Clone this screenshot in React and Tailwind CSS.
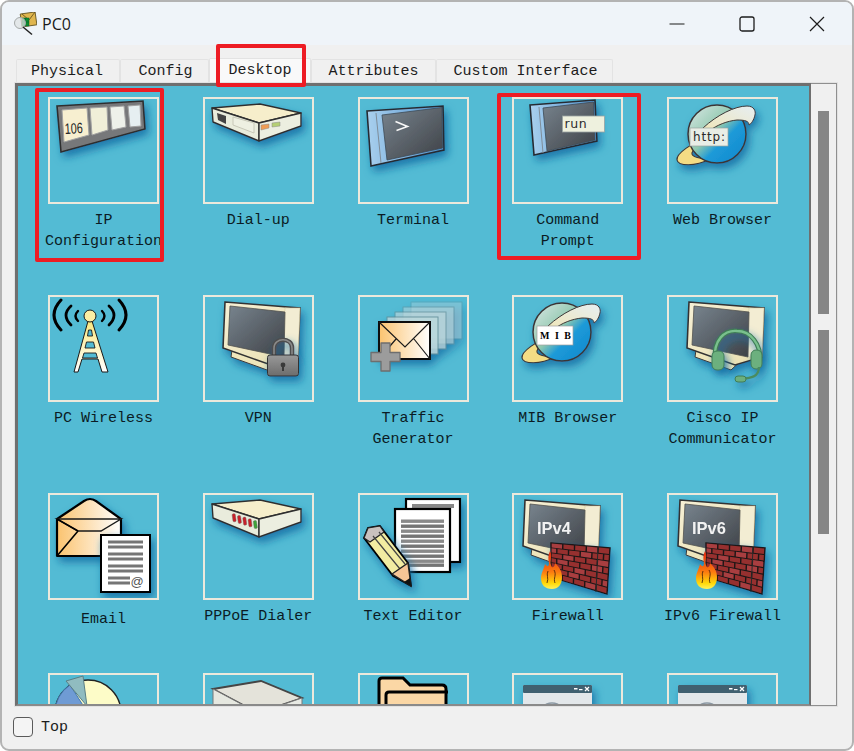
const MONO = "[font-family:'Liberation_Mono',monospace]";

function pts(a) { return a.map((p) => p.join(",")).join(" "); }

function Defs() {
  return (
    <svg className="absolute w-0 h-0" aria-hidden="true">
      <defs>
        <filter id="sh" x="-25%" y="-25%" width="160%" height="160%">
          <feDropShadow dx="3" dy="5" stdDeviation="4" floodColor="#136fa6" floodOpacity="0.9" />
        </filter>
        <filter id="soft" x="-10%" y="-10%" width="120%" height="120%">
          <feGaussianBlur stdDeviation="0.5" />
        </filter>
        <linearGradient id="scr" x1="0" y1="0" x2="1" y2="1">
          <stop offset="0" stopColor="#78848e" />
          <stop offset="1" stopColor="#3e4146" />
        </linearGradient>
        <linearGradient id="cream" x1="0" y1="0" x2="1" y2="1">
          <stop offset="0" stopColor="#f6f0d6" />
          <stop offset="1" stopColor="#eadfae" />
        </linearGradient>
        <linearGradient id="env" x1="0" y1="0" x2="1" y2="0">
          <stop offset="0" stopColor="#fbc36f" />
          <stop offset="1" stopColor="#ffffff" />
        </linearGradient>
        <linearGradient id="globe" x1="0" y1="0" x2="1" y2="1">
          <stop offset="0" stopColor="#dce8e6" />
          <stop offset="0.45" stopColor="#8fc8ae" />
          <stop offset="0.62" stopColor="#1d9ad8" />
          <stop offset="1" stopColor="#0f86cc" />
        </linearGradient>
        <linearGradient id="swoosh" x1="0" y1="1" x2="1" y2="0">
          <stop offset="0" stopColor="#f0e6b8" />
          <stop offset="1" stopColor="#e6eef2" />
        </linearGradient>
        <linearGradient id="flame" x1="0" y1="0" x2="0" y2="1">
          <stop offset="0" stopColor="#e3260e" />
          <stop offset="0.55" stopColor="#fb7a10" />
          <stop offset="0.85" stopColor="#ffd90a" />
          <stop offset="1" stopColor="#fff25a" />
        </linearGradient>
        <linearGradient id="tower" x1="0" y1="0" x2="0" y2="1">
          <stop offset="0" stopColor="#fbe87f" />
          <stop offset="1" stopColor="#ffffff" />
        </linearGradient>
        <linearGradient id="side" x1="0" y1="0" x2="1" y2="0">
          <stop offset="0" stopColor="#a9d0ee" />
          <stop offset="1" stopColor="#4f90cc" />
        </linearGradient>
        <linearGradient id="lock" x1="0" y1="0" x2="0" y2="1">
          <stop offset="0" stopColor="#999999" />
          <stop offset="1" stopColor="#6c6c6c" />
        </linearGradient>
      </defs>
    </svg>
  );
}

function Ic({ children }) {
  return (
    <svg viewBox="2 2 107 103" className="block w-[107px] h-[103px]">
      {children}
    </svg>
  );
}

function Monitor({ dx = 0, children }) {
  return (
    <g transform={`translate(${dx},0)`} filter="url(#sh)">
      <polygon points="29,55 28,62 64,75 78,62" fill="#efe6bb" stroke="#3b3a35" strokeWidth="1" />
      <polygon points="22,7 97,13 95,62 68,70 20,53" fill="url(#cream)" stroke="#333" strokeWidth="1.6" />
      <polygon points="82,13 97,13 95,62 80,62" fill="#f3edd3" stroke="#d8cfa4" strokeWidth="0.6" />
      <polygon points="27,11 82,17 81,62 25,50" fill="url(#scr)" stroke="#53534f" strokeWidth="0.8" />
      {children}
    </g>
  );
}

function IpConfig() {
  return (
    <Ic>
      <g filter="url(#sh)">
        <polygon points="9,9 95,4 97,32 13,55" fill="#77787a" stroke="#2d2d2d" strokeWidth="1.6" />
        <polygon points="14,13 39,11 41,38 16,45" fill="#f7efd0" stroke="#a2a2a2" />
        <polygon points="42,11 59,10 60,33 44,38" fill="#f0efd8" stroke="#a2a2a2" />
        <polygon points="62,10 76,9 78,30 64,33" fill="#eef1ea" stroke="#a2a2a2" />
        <polygon points="80,9 92,8 93,29 82,30" fill="#e6eff1" stroke="#a2a2a2" />
      </g>
      <text x="17" y="37" fontFamily="'Liberation Sans',sans-serif" fontSize="15" fill="#222" textLength="18" lengthAdjust="spacingAndGlyphs" transform="rotate(-3 17 37)">106</text>
    </Ic>
  );
}

function Modem({ leds }) {
  return (
    <Ic>
      <g filter="url(#sh)">
        <polygon points="9,11 57,7 98,16 56,26" fill="#f6eecb" stroke="#2f2f2f" strokeWidth="1.4" strokeLinejoin="round" />
        <polygon points="9,11 56,26 56,44 10,25" fill="#e9ecdc" stroke="#2f2f2f" strokeWidth="1.4" strokeLinejoin="round" />
        <polygon points="56,26 98,16 98,29 56,44" fill="#eceee0" stroke="#2f2f2f" strokeWidth="1.4" strokeLinejoin="round" />
      </g>
      {leds ? (
        [0, 1, 2, 3, 4].map((i) => (
          <rect key={i} x={29 + i * 5.3} y={21 + i * 1.7} width="3.2" height="8" rx="1.2" fill={i === 4 ? "#3fa33a" : "#c9202a"} stroke="#666" strokeWidth="0.4" transform={`rotate(-8 ${29 + i * 5.3} ${21 + i * 1.7})`} />
        ))
      ) : (
        <g>
          <polygon points="14,16 23,19 23,27 15,23" fill="#444" />
          <polygon points="30,20 51,26 51,36 30,28" fill="#eef0e2" stroke="#c8c8b8" />
          <polygon points="58,28 66,27 66,31 58,33" fill="#ef9c54" stroke="#888" strokeWidth="0.5" />
          <polygon points="69,26 77,25 77,29 69,30" fill="#b5cf74" stroke="#888" strokeWidth="0.5" />
        </g>
      )}
    </Ic>
  );
}

function Terminal() {
  return (
    <Ic>
      <g filter="url(#sh)">
        <polygon points="9,14 85,9 86,53 13,69" fill="url(#side)" stroke="#262b30" strokeWidth="1.6" />
        <polygon points="24,18 84,10.5 84.5,51 29,63" fill="url(#scr)" stroke="#3d4a55" strokeWidth="0.8" />
        <line x1="18" y1="16" x2="23" y2="66" stroke="#7f8d99" strokeWidth="1" />
      </g>
      <path d="M37.5 24.5 L49.5 29.5 L38.5 33.5" fill="none" stroke="#f7f7f7" strokeWidth="1.6" />
    </Ic>
  );
}

function Cmd() {
  return (
    <Ic>
      <g filter="url(#sh)">
        <polygon points="18,8 83,3 85,44 22,58" fill="url(#side)" stroke="#262b30" strokeWidth="1.6" />
        <polygon points="31,11 81.5,5 83,43 35,54" fill="url(#scr)" stroke="#3d4a55" strokeWidth="0.8" />
        <line x1="27" y1="10" x2="31" y2="56" stroke="#7f8d99" strokeWidth="1" />
      </g>
      <rect x="50.5" y="19" width="42" height="16" fill="#eef1de" stroke="#9aa4a2" strokeWidth="0.8" />
      <text x="52.5" y="31" fontFamily="'DejaVu Sans',sans-serif" fontSize="12.5" fill="#2c2c2c" letterSpacing="0.6">run</text>
    </Ic>
  );
}

function Globe({ cx, label, lx, ly, lw, lh, mib }) {
  const d = cx - 50;
  return (
    <Ic>
      <g filter="url(#sh)" transform={`translate(${d},0)`}>
        <path d="M36 42 C26 46 9 56 10 63 C11 69 28 70 43 62 C34 62 24 60 25 56 C26 52 32 48 36 46 Z" fill="#f4dc84" stroke="#3c3a38" strokeWidth="1.2" />
        <circle cx="50" cy="37" r="29" fill="url(#globe)" stroke="#3b3636" strokeWidth="1.5" />
        <path d="M36 31 C50 18 68 9 80 9 C87 9 89 14 88 18 C87 23 84 27 82 28 C82 24 78 23 70 23 C60 24 50 28 42 34 Z" fill="url(#swoosh)" stroke="#3b3636" strokeWidth="1" />
      </g>
      <rect x={lx} y={ly} width={lw} height={lh} fill={mib ? "#ffffff" : "#e9eee6"} stroke={mib ? "#9e9e9e" : "#9aa49e"} strokeWidth="0.7" />
      {mib ? (
        <text x={lx + 3} y={ly + 13} fontFamily="'Liberation Serif',serif" fontWeight="700" fontSize="10" fill="#000" letterSpacing="1.5">M I B</text>
      ) : (
        <text x={lx + 3} y={ly + 13} fontFamily="'DejaVu Sans',sans-serif" fontSize="12" fill="#2a2a2a" textLength={lw - 6}>http:</text>
      )}
    </Ic>
  );
}

function Wireless() {
  return (
    <Ic>
      <g stroke="#000" fill="none" strokeLinecap="round">
        <path d="M13 5 Q-1 20 13 35" strokeWidth="3" />
        <path d="M23 11 Q13 20 23 30" strokeWidth="2.8" />
        <path d="M30 16 Q25 21 30 26" strokeWidth="2.4" />
        <path d="M71 5 Q85 20 71 35" strokeWidth="3" />
        <path d="M61 11 Q71 20 61 30" strokeWidth="2.8" />
        <path d="M54 16 Q59 21 54 26" strokeWidth="2.4" />
      </g>
      <polygon points="40,26 44,26 60,77 54,77 50,64 34,64 30,77 26,77" fill="url(#tower)" stroke="#1a1a1a" strokeWidth="1" />
      <g fill="#53bbd4" stroke="#1a1a1a" strokeWidth="0.9">
        <polygon points="40.5,35 43.5,35 44.5,41 39.5,41" />
        <polygon points="38.5,47 45.5,47 47,53 37,53" />
        <polygon points="36,58 48,58 49.5,63 34.5,63" />
      </g>
      <circle cx="42" cy="21" r="6" fill="#fbeea4" stroke="#1a1a1a" strokeWidth="1" />
    </Ic>
  );
}

function Vpn() {
  return (
    <Ic>
      <Monitor />
      <g filter="url(#sh)">
        <path d="M71 60 V53 C71 42 89 42 89 53 V60" fill="none" stroke="#4d4d4d" strokeWidth="4.5" />
        <path d="M71 60 V53 C71 42 89 42 89 53 V60" fill="none" stroke="#8a8a8a" strokeWidth="1.5" />
        <rect x="64.5" y="60" width="31" height="21" rx="2.5" fill="url(#lock)" stroke="#333" strokeWidth="1" />
      </g>
      <circle cx="80" cy="70" r="2.4" fill="#3a3a3a" />
      <rect x="79" y="70" width="2" height="6" fill="#3a3a3a" />
    </Ic>
  );
}

function Traffic() {
  const ghost = [4, 3, 2, 1];
  return (
    <Ic>
      <g filter="url(#sh)">
        {ghost.map((i) => (
          <g key={i} opacity={0.35 + (4 - i) * 0.15}>
            <rect x={21 + i * 8} y={27 - i * 5} width="51" height="37" fill="#bcd8dc" stroke="#5f8c96" strokeWidth="1" />
          </g>
        ))}
        <rect x="21" y="27" width="51" height="37" fill="url(#env)" stroke="#111" strokeWidth="2" />
      </g>
      <path d="M21 27 L47 52 L72 27 M21 64 L38 44 M72 64 L56 44" fill="none" stroke="#1a1a1a" strokeWidth="1.2" />
      <path d="M23 48 H32 V57.5 H42 V66.5 H32 V76 H23 V66.5 H13 V57.5 H23 Z" fill="#9c9c9c" stroke="#6e6e6e" strokeWidth="1.3" strokeLinejoin="round" />
    </Ic>
  );
}

function Cisco() {
  return (
    <Ic>
      <Monitor />
      <g filter="url(#sh)">
        <path d="M48 66 C46 44 58 35 70 36 C84 36 94 50 93 65" fill="none" stroke="#3f7d55" strokeWidth="4.6" />
        <path d="M48 66 C46 44 58 35 70 36 C84 36 94 50 93 65" fill="none" stroke="#79c08d" strokeWidth="2.4" />
        <rect x="45" y="56" width="12" height="19" rx="5" fill="#6cb07e" stroke="#3f7d55" />
        <rect x="84" y="55" width="11" height="19" rx="5" fill="#6cb07e" stroke="#3f7d55" />
        <path d="M92 72 C92 82 84 83 74 84" fill="none" stroke="#4a8c60" strokeWidth="2.4" />
        <rect x="68" y="81" width="11" height="6" rx="3" fill="#6cb07e" stroke="#3f7d55" />
      </g>
    </Ic>
  );
}

function Email() {
  const ys = [49, 54, 61, 66, 73, 78];
  return (
    <Ic>
      <g filter="url(#sh)">
        <path d="M9 26 L36 8 Q42 4 48 8 L73 26 V63 H9 Z" fill="url(#env)" stroke="#000" strokeWidth="2.2" strokeLinejoin="round" />
      </g>
      <path d="M9 26 H73 L53 38 H30 Z" fill="url(#env)" stroke="#1a1a1a" strokeWidth="1.4" />
      <path d="M9 63 L30 38 M9 26 L30 38" fill="none" stroke="#000" strokeWidth="1.6" />
      <g filter="url(#sh)">
        <rect x="53" y="42" width="49" height="57" fill="#fff" stroke="#000" strokeWidth="2" />
      </g>
      {ys.map((y) => (
        <rect key={y} x="60" y={y - 1.5} width="35" height="3" fill="#757575" />
      ))}
      <rect x="60" y="83.5" width="22" height="3" fill="#757575" />
      <rect x="60" y="88.5" width="22" height="3" fill="#757575" />
      <text x="82.5" y="92.5" fontFamily="'Liberation Sans',sans-serif" fontSize="13" fill="#555">@</text>
    </Ic>
  );
}

function Editor() {
  const ys = [28, 33, 38, 43, 48, 53, 58, 63, 68, 72];
  return (
    <Ic>
      <g filter="url(#sh)">
        <rect x="48" y="6" width="54" height="63" fill="#fff" stroke="#000" strokeWidth="2.2" />
      </g>
      <rect x="54" y="11" width="42" height="4" fill="#888" />
      <rect x="37" y="16" width="55" height="63" fill="#fff" stroke="#000" strokeWidth="2.2" />
      {ys.map((y, i) => (
        <rect key={y} x="43" y={y - 1.5} width="43" height="3.4" fill={i % 2 ? "#757575" : "#8a8a8a"} />
      ))}
      <g filter="url(#sh)">
        <polygon points="53,93 35,83 6,45 10,35 22,33 50,70" fill="#f2eca2" stroke="#000" strokeWidth="2" strokeLinejoin="round" />
      </g>
      <polygon points="6,45 10,35 22,33 26,39 12,49" fill="#c9c1be" stroke="#222" strokeWidth="1.2" />
      <path d="M15 43 L42 76 M21 39 L47 71" stroke="#444" strokeWidth="1.2" />
      <polygon points="34,81 50,70 53,93" fill="#f6c596" stroke="#222" strokeWidth="1.4" />
      <polygon points="46,89 52,85 53,93" fill="#111" />
    </Ic>
  );
}

function bil(u, v) {
  const tl = [39, 50], tr = [98, 55], br = [95, 101], bl = [39, 84];
  const x = (1 - v) * ((1 - u) * tl[0] + u * tr[0]) + v * ((1 - u) * bl[0] + u * br[0]);
  const y = (1 - v) * ((1 - u) * tl[1] + u * tr[1]) + v * ((1 - u) * bl[1] + u * br[1]);
  return [x, y];
}

function Bricks() {
  const out = [];
  const rows = 7;
  for (let r = 0; r < rows; r++) {
    const off = r % 2 ? 0.1 : 0;
    for (let c = -1; c < 5; c++) {
      const u0 = Math.max(0.01, off + c * 0.2 + 0.012);
      const u1 = Math.min(0.99, off + (c + 1) * 0.2 - 0.012);
      if (u1 <= u0) continue;
      const v0 = r / rows + 0.012;
      const v1 = (r + 1) / rows - 0.012;
      out.push(
        <polygon key={`${r}-${c}`} points={pts([bil(u0, v0), bil(u1, v0), bil(u1, v1), bil(u0, v1)])} fill={(r + c) % 3 === 0 ? "#a83e40" : "#96302f"} />
      );
    }
  }
  return out;
}

function Firewall({ label }) {
  return (
    <Ic>
      <Monitor dx={-9}>
        <text x="34" y="41" fontFamily="'Liberation Sans',sans-serif" fontWeight="700" fontSize="16.5" fill="#f2f2f2">{label}</text>
      </Monitor>
      <g filter="url(#sh)">
        <polygon points="39,50 98,55 95,101 39,84" fill="#1f1613" stroke="#1f1613" strokeWidth="1.5" />
      </g>
      <Bricks />
      <line x1="86" y1="54" x2="84" y2="99" stroke="#2a2a2a" strokeWidth="1" />
      <path d="M38 58 C41 64 37 68 39 72 C40 76 43 74 43 70 C47 74 50 78 50 84 C50 92 46 96 40 96 C33 96 29 92 29 85 C29 80 32 76 33 71 C35 74 37 74 37 70 C36 66 36 62 38 58 Z" fill="url(#flame)" />
      <path d="M36 78 C34 82 37 85 35 90 M42 77 C45 82 41 85 43 90" fill="none" stroke="#3a1a0a" strokeWidth="0.8" />
    </Ic>
  );
}

function Pie() {
  return (
    <Ic>
      <circle cx="40" cy="40" r="33" fill="#fdfcc8" stroke="#222" strokeWidth="1.4" />
      <path d="M40 40 L22 12 A33 33 0 0 0 7 40 Z" fill="#6f9bd4" stroke="#3f78b0" />
      <polygon points="18,8 35,3 39,33" fill="#90bcc0" stroke="#5a7f85" />
    </Ic>
  );
}

function BigBox() {
  return (
    <Ic>
      <g filter="url(#soft)">
        <polygon points="10,16 58,8 99,25 55,40" fill="#e4e3da" stroke="#444" strokeWidth="1.8" />
        <polygon points="10,16 55,40 55,60 10,40" fill="#e6e8e0" stroke="#777" strokeWidth="1" />
        <polygon points="55,40 99,25 99,50 55,60" fill="#e8eae4" stroke="#777" strokeWidth="1" />
      </g>
    </Ic>
  );
}

function Folder() {
  return (
    <Ic>
      <path d="M21 40 V8 Q21 5 24 5 H45 L52 12 H84 Q88 12 88 16 V40 Z" fill="#fbd7a5" stroke="#000" strokeWidth="3" />
      <path d="M28 40 V22 Q28 19 31 19 H90" fill="#fbd7a5" stroke="#000" strokeWidth="3" />
    </Ic>
  );
}

function Win() {
  return (
    <Ic>
      <g filter="url(#sh)">
        <rect x="11" y="12" width="69" height="30" fill="#e3e7ea" />
        <rect x="11" y="12" width="69" height="8" rx="1" fill="#41606f" />
      </g>
      <rect x="62" y="15" width="3.5" height="1.5" fill="#fff" />
      <rect x="67" y="16" width="3.5" height="1.2" fill="#fff" />
      <path d="M73 14 L77 18 M77 14 L73 18" stroke="#fff" strokeWidth="1.2" />
      <ellipse cx="40" cy="33" rx="7" ry="3" fill="none" stroke="#8b98a3" strokeWidth="1.4" />
    </Ic>
  );
}

const rows = [
  [
    { l: ["IP", "Configuration"], i: <IpConfig /> },
    { l: ["Dial-up"], i: <Modem /> },
    { l: ["Terminal"], i: <Terminal /> },
    { l: ["Command", "Prompt"], i: <Cmd /> },
    { l: ["Web Browser"], i: <Globe cx={50} lx={23} ly={31} lw={38} lh={18} /> },
  ],
  [
    { l: ["PC Wireless"], i: <Wireless /> },
    { l: ["VPN"], i: <Vpn /> },
    { l: ["Traffic", "Generator"], i: <Traffic /> },
    { l: ["MIB Browser"], i: <Globe cx={50} lx={25} ly={31} lw={36} lh={19} mib /> },
    { l: ["Cisco IP", "Communicator"], i: <Cisco /> },
  ],
  [
    { l: ["Email"], i: <Email />, low: true },
    { l: ["PPPoE Dialer"], i: <Modem leds /> },
    { l: ["Text Editor"], i: <Editor /> },
    { l: ["Firewall"], i: <Firewall label="IPv4" /> },
    { l: ["IPv6 Firewall"], i: <Firewall label="IPv6" /> },
  ],
  [
    { l: [], i: <Pie /> },
    { l: [], i: <BigBox /> },
    { l: [], i: <Folder /> },
    { l: [], i: <Win /> },
    { l: [], i: <Win /> },
  ],
];

function Cell({ item }) {
  return (
    <div className="flex flex-col items-center w-[111px]">
      <div className="w-[111px] h-[107px] shrink-0 border-2 border-[#ece9dc] box-border overflow-hidden">{item.i}</div>
      <div className={`${item.low ? "mt-[9px]" : "mt-[6px]"} flex flex-col items-center text-[15px] leading-[21px] text-[#0b1b24] whitespace-nowrap ${MONO}`}>
        {item.l.map((t) => (
          <div key={t}>{t}</div>
        ))}
      </div>
    </div>
  );
}

function Tab({ w, label, active, pad }) {
  return (
    <div className={`${w} ${pad} ${active ? "h-[24px] bg-[#f9f9f9]" : "h-[23px] bg-[#f0f0f0]"} flex items-center justify-center border-t border-l border-r border-[#e3e3e3] rounded-t-[2px] pt-[2px] text-[15px] text-[#1c1c1c] ${MONO}`}>
      {label}
    </div>
  );
}

function TitleIcon() {
  return (
    <svg viewBox="0 0 24 24" className="w-[24px] h-[24px]">
      <rect x="8" y="1" width="15" height="13" fill="#e0b64f" stroke="#5a4a1a" strokeWidth="0.8" transform="rotate(-8 15 7)" />
      <path d="M9 2 L16 8 L22 0" fill="none" stroke="#5a4a1a" strokeWidth="0.8" />
      <rect x="9" y="6" width="7" height="8" fill="#0d8a2c" stroke="#063" strokeWidth="0.5" />
      <path d="M12.5 6 V14 M9 10 H16" stroke="#063" strokeWidth="0.7" />
      <circle cx="7" cy="11" r="5.5" fill="#dfe3e3" fillOpacity="0.75" stroke="#a5a9a9" strokeWidth="1" />
      <line x1="10" y1="15" x2="19" y2="22.5" stroke="#222" strokeWidth="1.5" />
    </svg>
  );
}

function Marker({ cls }) {
  return <div className={`absolute border-[4px] border-[#ed1c24] rounded-[2px] pointer-events-none ${cls}`} />;
}

export default function App() {
  return (
    <div className="relative w-[854px] h-[751px] bg-white overflow-hidden">
      <Defs />
      <div className="w-full h-full flex flex-col box-border border-2 border-[#b3b3b3] rounded-[9px] overflow-hidden bg-[#f0f0f0]">
        <div className="h-[43px] shrink-0 flex items-center bg-[#eff4f9]">
          <div className="ml-[11px] flex items-center">
            <TitleIcon />
          </div>
          <span className="ml-[5px] text-[16px] text-[#1a1a1a] [font-family:'Open_Sans',sans-serif]">PC0</span>
          <div className="ml-auto flex items-center">
            <svg viewBox="0 0 16 16" className="w-[16px] h-[16px] mr-[54px]">
              <line x1="0.5" y1="8" x2="15.5" y2="8" stroke="#1c1c1c" strokeWidth="1.2" />
            </svg>
            <svg viewBox="0 0 16 16" className="w-[16px] h-[16px] mr-[54px]">
              <rect x="1" y="1" width="14" height="14" rx="2" fill="none" stroke="#1c1c1c" strokeWidth="1.3" />
            </svg>
            <svg viewBox="0 0 16 16" className="w-[16px] h-[16px] mr-[27px]">
              <path d="M1 1 L15 15 M15 1 L1 15" stroke="#1c1c1c" strokeWidth="1.2" />
            </svg>
          </div>
        </div>

        <div className="h-[37px] shrink-0 flex items-end pl-[14px]">
          <Tab w="w-[104px]" pad="pr-[2px]" label="Physical" />
          <Tab w="w-[89px]" pad="pl-[2px]" label="Config" />
          <Tab w="w-[102px]" pad="" label="Desktop" active />
          <Tab w="w-[125px]" pad="" label="Attributes" />
          <Tab w="w-[177px]" pad="pl-[2px]" label="Custom Interface" />
        </div>

        <div className="ml-[12px] w-[824px] h-[625px] shrink-0 box-border border border-[#e2e2e2] flex">
          <div className="w-[796px] h-full box-border border-l-[3px] border-t-[3px] border-r-2 border-b-2 border-l-[#6f6f6f] border-t-[#6f6f6f] border-r-[#6f6f6f] border-b-[#8a8a8a] bg-[#53bbd4] overflow-hidden pl-[30px] pt-[11px]">
            <div className="grid grid-cols-[repeat(5,154.75px)] grid-rows-[198px_198px_180px_107px]">
              {rows.flat().map((item, i) => (
                <Cell key={i} item={item} />
              ))}
            </div>
          </div>
          <div className="w-[26px] h-full box-border border-r border-t border-b border-[#8f8f8f] bg-[#f0f0f0] pl-[7px] pt-[27px] flex flex-col">
            <div className="w-[11px] h-[203px] bg-[#868686]" />
            <div className="w-[11px] h-[204px] mt-[16px] bg-[#868686]" />
          </div>
        </div>

        <div className="flex-1 flex items-center pl-[11px] pb-[2px]">
          <div className="w-[20px] h-[20px] box-border border border-[#5a5a5a] rounded-[4px] bg-[#f4f4f4]" />
          <span className={`ml-[8px] pt-[2px] text-[15px] text-[#1c1c1c] ${MONO}`}>Top</span>
        </div>
      </div>

      <Marker cls="left-[216px] top-[44px] w-[90px] h-[43px]" />
      <Marker cls="left-[35px] top-[88px] w-[129px] h-[174px]" />
      <Marker cls="left-[497px] top-[93px] w-[144px] h-[167px]" />
    </div>
  );
}
